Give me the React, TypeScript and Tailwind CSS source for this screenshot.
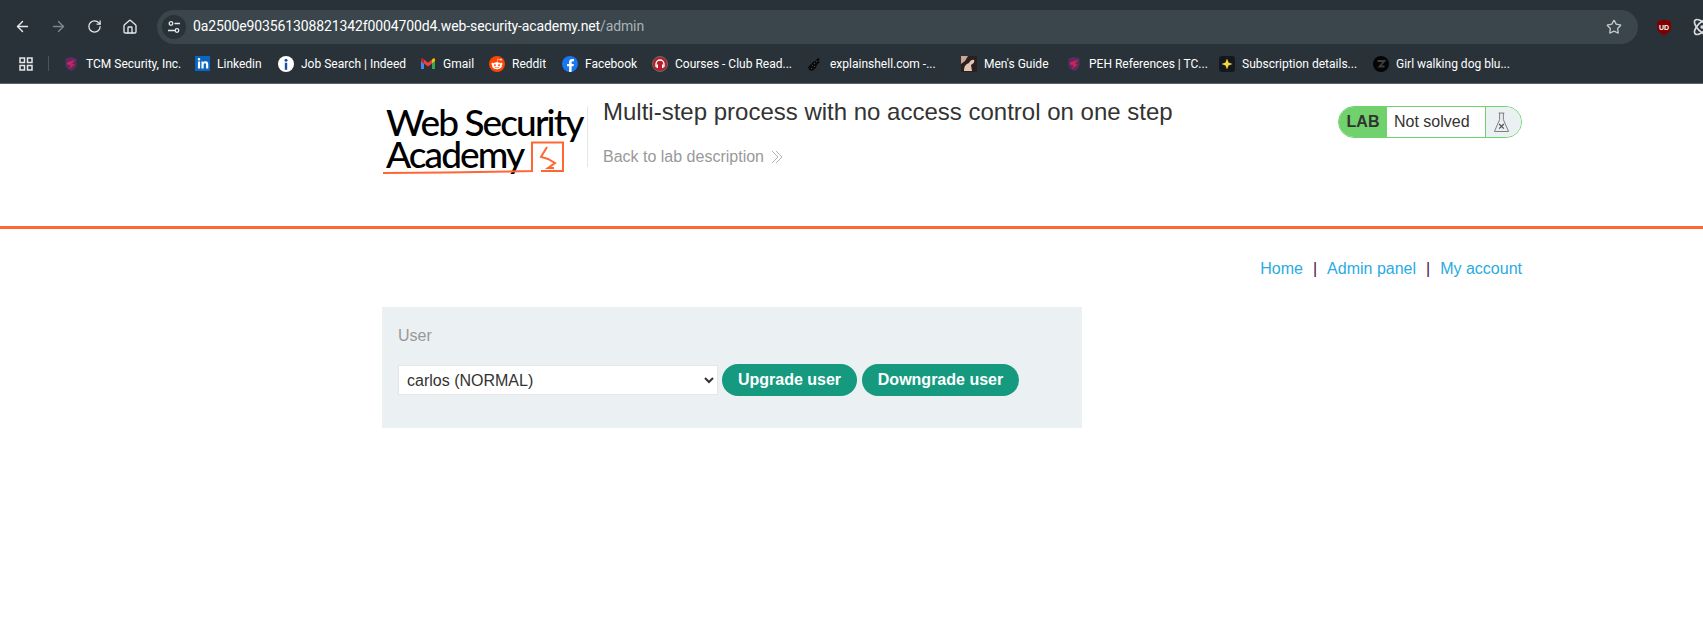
import { ArrowLeft, ArrowRight, Atom, House, RotateCw, Star } from 'lucide-react'
import { FaFacebookF, FaLinkedinIn, FaRedditAlien } from 'react-icons/fa'

const Shield = () => (
  <svg viewBox="0 0 16 16" className="w-4 h-4">
    <path d="M2.500 2.500 8 1l5.500 1.500v6C13.500 11.500 11 14 8 15 5 14 2.500 11.500 2.500 8.500Z" fill="#5d2a66" />
    <path d="M4 6.500 12 3.500 9 8l3 .5-6 4.500 1.500-4L4 8.500Z" fill="#c9264f" />
  </svg>
)

const Info = () => (
  <svg viewBox="0 0 16 16" className="w-4 h-4">
    <circle cx="8" cy="8" r="8" fill="#fff" />
    <circle cx="8" cy="4.200" r="1.500" fill="#1a4fa0" />
    <path d="M6.800 6.700h2.400v7h-2.400z" fill="#1a4fa0" />
  </svg>
)

const Gmail = () => (
  <svg viewBox="0 0 16 16" className="w-4 h-4">
    <path d="M1 4.500v8.500h3V7.500Z" fill="#4285f4" />
    <path d="M15 4.500v8.500h-3V7.500Z" fill="#34a853" />
    <path d="M4 7.500 1 5V3.500C1 2.500 2.200 2 3 2.700L4 3.500Z" fill="#c5221f" />
    <path d="M4 3.500 8 6.700l4-3.200v4L8 10.500 4 7.500Z" fill="#ea4335" />
    <path d="M12 3.500l1-.8c.8-.7 2-.2 2 .8V5l-3 2.500Z" fill="#fbbc04" />
  </svg>
)

const Reddit = () => (
  <span className="w-4 h-4 rounded-full bg-[#ff4500] flex items-center justify-center">
    <FaRedditAlien className="w-3 h-3 text-white" />
  </span>
)

const Facebook = () => (
  <span className="w-4 h-4 rounded-full bg-[#1877f2] flex items-end justify-center overflow-hidden">
    <FaFacebookF className="w-[13px] h-[13px] text-white" />
  </span>
)

const Headphones = () => (
  <svg viewBox="0 0 16 16" className="w-4 h-4">
    <circle cx="8" cy="8" r="7.500" fill="#b3202c" stroke="#6b6b6b" />
    <path d="M4 11V8a4 4 0 0 1 8 0v3" fill="none" stroke="#fff" strokeWidth="1.300" />
    <path d="M4.500 8.500h1.500v3.500h-1.500zM10 8.500h1.500v3.500H10z" fill="#fff" />
  </svg>
)

const Shell = () => (
  <svg viewBox="0 0 16 16" className="w-4 h-4">
    <path d="M1 11 6 6l2-1 3-3 2 1-2 2 2 1-3 3-1 3-4 3-3-1Z" fill="#0b0b0b" />
    <path d="M5 9h1v1H5zM7 7h1v1H7zM9 5h1v1H9zM4 12h1v1H4zM7 10h1v1H7z" fill="#4a4a4a" />
  </svg>
)

const Guide = () => (
  <svg viewBox="0 0 16 16" className="w-4 h-4">
    <rect width="16" height="16" fill="#2a2020" />
    <path d="M0 0h7L4 5l-4 3Z" fill="#c9a596" />
    <path d="M3 15c0-5 2-7 5-8 1-2 3-4 5-3 1 2-1 4-3 5l1 6Z" fill="#e5c3b2" />
  </svg>
)

const Spark = () => (
  <svg viewBox="0 0 16 16" className="w-4 h-4">
    <rect width="16" height="16" rx="3" fill="#15181a" />
    <path d="M8 2.500 9.500 6.500 13.500 8 9.500 9.500 8 13.500 6.500 9.500 2.500 8 6.500 6.500Z" fill="#f7d33c" />
  </svg>
)

const ZMark = () => (
  <svg viewBox="0 0 16 16" className="w-4 h-4">
    <circle cx="8" cy="8" r="8" fill="#050505" />
    <path d="M4.500 5h7L6.500 10.500h5" fill="none" stroke="#3b4045" strokeWidth="1.800" />
  </svg>
)

const bookmarks = [
  { label: 'TCM Security, Inc.', icon: <Shield />, textClass: 'w-[92px]' },
  { label: 'Linkedin', icon: <span className="w-[15px] h-[15px] bg-[#0a66c2] flex items-center justify-center"><FaLinkedinIn className="w-3 h-3 text-white" /></span>, textClass: 'w-[44px]' },
  { label: 'Job Search | Indeed', icon: <Info />, textClass: 'w-[102px]' },
  { label: 'Gmail', icon: <Gmail />, textClass: 'w-[29px]' },
  { label: 'Reddit', icon: <Reddit />, textClass: 'w-[33px]' },
  { label: 'Facebook', icon: <Facebook />, textClass: 'w-[50px]' },
  { label: 'Courses - Club Read...', icon: <Headphones />, textClass: 'w-[115px]' },
  { label: 'explainshell.com -...', icon: <Shell />, textClass: 'w-[114px]' },
  { label: "Men's Guide", icon: <Guide />, textClass: 'w-[65px]' },
  { label: 'PEH References | TC...', icon: <Shield />, textClass: 'w-[113px]' },
  { label: 'Subscription details...', icon: <Spark />, textClass: 'w-[114px]' },
  { label: 'Girl walking dog blu...', icon: <ZMark />, textClass: 'w-[114px]' },
]

function BrowserChrome() {
  return (
    <div className="h-[84px] bg-[#293239] border-b border-[#5c666c] overflow-hidden">
      <div className="h-[44px] pt-[9px] pl-[4px] flex items-center">
        <button className="w-9 shrink-0 flex justify-center text-[#e6e9eb]"><ArrowLeft size={17} /></button>
        <button className="w-9 shrink-0 flex justify-center text-[#7d868b]"><ArrowRight size={17} /></button>
        <button className="w-9 shrink-0 flex justify-center text-[#e6e9eb]"><RotateCw size={15} /></button>
        <button className="w-9 shrink-0 flex justify-center text-[#e6e9eb]"><House size={16} /></button>
        <div className="ml-[9px] w-[1481px] h-[34px] shrink-0 rounded-full bg-[#3a464c] flex items-center pl-[5px] pr-[16px]">
          <span className="w-6 h-6 rounded-full bg-[#293239] flex items-center justify-center">
            <svg viewBox="0 0 16 16" className="w-4 h-4 text-[#e6e9eb]" fill="none" stroke="currentColor" strokeWidth="1.300">
              <circle cx="5" cy="4.500" r="1.800" />
              <path d="M8.500 4.500H14M2 11.500h7" />
              <circle cx="11" cy="11.500" r="1.800" />
            </svg>
          </span>
          <span className="ml-[7px] text-[14px] tracking-[-0.12px] text-white font-['Roboto',sans-serif] whitespace-nowrap">
            0a2500e903561308821342f0004700d4.web-security-academy.net<span className="text-[#a9b2b7]">/admin</span>
          </span>
          <Star size={16} className="ml-auto text-[#c3c8cb]" />
        </div>
        <svg viewBox="0 0 16 16" className="ml-[18px] w-4 h-4 shrink-0">
          <path d="M8 .5 15 2.500v6c0 3.500-3 6-7 7.500-4-1.500-7-4-7-7.500v-6Z" fill="#800000" />
          <text x="8" y="10.500" textAnchor="middle" fontSize="7" fontWeight="700" fill="#fff" fontFamily="Liberation Sans">UD</text>
        </svg>
        <Atom size={20} className="ml-[20px] shrink-0 text-[#d8dcde]" />
      </div>
      <div className="h-[39px] flex items-center pl-[19px] text-[12px] text-white font-['Roboto',sans-serif]">
        <svg viewBox="0 0 14 14" className="w-[14px] h-[14px]" fill="none" stroke="#e6e9eb" strokeWidth="1.500">
          <path d="M1 1h4.500v4.500H1zM8.500 1H13v4.500H8.500zM1 8.500h4.500V13H1zM8.500 8.500H13V13H8.500z" />
        </svg>
        <span className="ml-[15px] mr-[14px] w-px h-[15px] bg-[#4a555b]" />
        <div className="flex items-center gap-[17px]">
          {bookmarks.map((b) => (
            <div key={b.label} className="flex items-center gap-[7px]">
              {b.icon}
              <span className={`${b.textClass} whitespace-nowrap`}>{b.label}</span>
            </div>
          ))}
        </div>
      </div>
    </div>
  )
}

function Logo() {
  return (
    <div className="relative w-[205px] h-[64px] font-['Lato',sans-serif] font-medium text-black text-[37px] leading-[32px] tracking-[-1.9px]">
      <div className="whitespace-nowrap">Web Security</div>
      <div className="whitespace-nowrap">Academy</div>
      <svg viewBox="0 0 205 64" className="absolute left-0 top-0 w-[205px] h-[64px] overflow-visible" fill="none" stroke="#ff6633" strokeWidth="2">
        <path d="M-3 67 60 66.500 146 65V36.500H177V65H155" />
        <path d="M161 41 155 51 162 53 169 57 162 62H168" />
      </svg>
    </div>
  )
}

function LabStatus() {
  return (
    <div className="w-[184px] h-[32px] flex border border-[#70d16d] rounded-full overflow-hidden text-[16px]">
      <div className="w-[48px] bg-[#70d16d] font-bold text-[#333332] flex items-center justify-center">LAB</div>
      <div className="w-[98px] pl-[7px] text-[#333332] flex items-center">Not solved</div>
      <div className="flex-1 bg-[#ebf0f2] border-l border-[#70d16d] flex items-center justify-center pr-[5px]">
        <svg viewBox="0 0 18 24" className="w-[17px] h-[23px]" fill="none" stroke="#777" strokeWidth="1">
          <path d="M6 2h6M7 2v7L1.500 21.500h15L11 9V2" />
          <path d="M6.500 13.500l5 5M11.500 13.500l-5 5" strokeWidth="1.400" stroke="#555" />
        </svg>
      </div>
    </div>
  )
}

export default function App() {
  return (
    <div className="min-h-screen bg-white font-['Liberation_Sans',Arial,sans-serif] overflow-hidden">
      <BrowserChrome />

      {/* lab header */}
      <div className="h-[145px] border-b-[3px] border-[#ff6633] pl-[386px] pt-[22px] flex items-start">
        <Logo />
        <div className="ml-[-4px] w-px h-[61px] bg-[#e6e6e6]" />
        <div className="ml-[15px] w-[735px]">
          <h2 className="text-[24px] leading-[30px] text-[#333332] -mt-[9px] whitespace-nowrap">Multi-step process with no access control on one step</h2>
          <a className="mt-[18px] flex items-center gap-[7px] text-[16px] text-[#999]">
            Back to lab description
            <svg viewBox="0 0 12 14" className="w-[12px] h-[14px]" fill="none" stroke="#b3b3b3">
              <path d="M1 1l6 6-6 6M5 1l6 6-6 6" />
            </svg>
          </a>
        </div>
        <LabStatus />
      </div>

      {/* page content */}
      <div className="w-[1140px] ml-[382px]">
        <div className="mt-[30px] flex justify-end items-center gap-[10px] text-[16px] leading-[20px] text-[#29abe2]">
          <a>Home</a>
          <span className="text-[#4d144a]">|</span>
          <a>Admin panel</a>
          <span className="text-[#4d144a]">|</span>
          <a>My account</a>
        </div>
        <div className="mt-[28px] w-[700px] h-[121px] bg-[#ebf0f2] pl-[16px] pt-[20px]">
          <label className="block text-[16px] leading-[18px] text-[#999]">User</label>
          <div className="mt-[19px] flex items-center">
            <select className="w-[320px] h-[30px] bg-white border border-[#e6e6e6] text-[16px] text-[#333332] pl-[4px]">
              <option>carlos (NORMAL)</option>
            </select>
            <button className="ml-[4px] w-[135px] h-[32px] rounded-full bg-[#159a7f] text-white font-bold text-[16px]">Upgrade user</button>
            <button className="ml-[5px] w-[157px] h-[32px] rounded-full bg-[#159a7f] text-white font-bold text-[16px]">Downgrade user</button>
          </div>
        </div>
      </div>
    </div>
  )
}
